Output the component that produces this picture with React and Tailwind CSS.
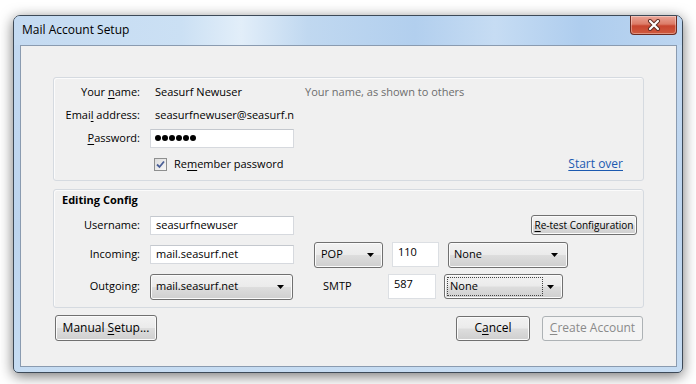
import React from "react";

const btn =
  "flex items-center rounded-[3px] border border-[#707070] bg-[linear-gradient(180deg,#f2f2f2_0%,#ebebeb_48%,#dddddd_52%,#cfcfcf_100%)] shadow-[inset_0_0_0_1px_#fbfbfb] text-black";

function Arrow() {
  return (
    <svg width="7" height="4" viewBox="0 0 7 4" className="shrink-0">
      <path d="M0 0H7L3.5 4Z" fill="#000" />
    </svg>
  );
}

function U({ children }) {
  return <span className="underline underline-offset-[2px] decoration-[1px]">{children}</span>;
}

export default function App() {
  return (
    <div
      className="w-[696px] h-[384px] bg-white overflow-hidden text-[11px] text-black"
      style={{ fontFamily: '"Open Sans", "Noto Sans", sans-serif' }}
    >
      <div className="ml-[13px] mt-[15px] w-[670px] h-[358px] rounded-t-[7px] rounded-b-[5px] border border-[#3d4a58] bg-[linear-gradient(180deg,#c3d9f1_0%,#bcd4ee_60%,#c6dcf2_100%)] shadow-[0_3px_14px_rgba(0,0,0,0.55)] flex flex-col">
        {/* title bar */}
        <div className="h-[29px] flex items-start rounded-t-[6px] bg-[linear-gradient(90deg,#c4daf1_0%,#cbe0f4_25%,#e2eef9_34%,#c0d8f0_44%,#b2cfee_60%,#c6dcf3_72%,#aecdee_85%,#bcd5f0_100%)]">
          <div className="pl-[8px] pt-[6px] text-[12px] leading-[16px]">Mail Account Setup</div>
          <div className="ml-auto mr-[5px] w-[47px] h-[19px] rounded-b-[4px] border border-t-0 border-[#6b2a20] bg-[linear-gradient(180deg,#eba597_0%,#dc7b67_45%,#c8452f_55%,#cf5a3e_100%)] shadow-[inset_0_0_0_1px_rgba(255,255,255,0.35)] flex items-center justify-center">
            <svg width="14" height="12" viewBox="0 0 14 12">
              <path d="M3 2L11 10M11 2L3 10" stroke="#5a2a22" strokeWidth="4" strokeLinecap="round" />
              <path d="M3 2L11 10M11 2L3 10" stroke="#ffffff" strokeWidth="2.2" strokeLinecap="round" />
            </svg>
          </div>
        </div>

        {/* client area */}
        <div className="ml-[6px] mr-[5px] mb-[5px] h-[322px] border border-[#8a9bb0] bg-[#f0f0f0] pt-[31px] pl-[32px]">
          {/* group 1 */}
          <div className="w-[591px] h-[104px] rounded-[3px] border border-[#d5dae0] shadow-[inset_1px_1px_0_#fbfbfb] pt-[2px] flex flex-col">
            <div className="h-[24px] flex items-center">
              <div className="w-[86px] text-right">
                Your <U>n</U>ame:
              </div>
              <div className="ml-[10px] w-[144px] pl-[5px]">Seasurf Newuser</div>
              <div className="ml-[11px] text-[#6d6d6d]">Your name, as shown to others</div>
            </div>
            <div className="h-[22px] flex items-center">
              <div className="w-[86px] text-right">
                Emai<U>l</U> address:
              </div>
              <div className="ml-[10px] w-[150px] pl-[5px] whitespace-nowrap">seasurfnewuser@seasurf.n</div>
            </div>
            <div className="h-[24px] flex items-center">
              <div className="w-[86px] text-right">
                <U>P</U>assword:
              </div>
              <div className="ml-[10px] w-[144px] h-[19px] bg-white border border-[#d6d9de] border-t-[#c4c8ce] flex items-center pl-[4px] gap-[1px]">
                {[0, 1, 2, 3, 4, 5].map((i) => (
                  <span key={i} className="w-[6px] h-[6px] rounded-full bg-black" />
                ))}
              </div>
            </div>
            <div className="h-[28px] flex items-center">
              <div className="w-[86px]" />
              <div className="ml-[14px] w-[13px] h-[13px] border border-[#8e8f8f] bg-[linear-gradient(135deg,#dcdcdc_0%,#f7f7f7_100%)] flex items-center justify-center">
                <svg width="9" height="9" viewBox="0 0 9 9">
                  <path d="M1 4.5L3.5 7L8 1.5" stroke="#4a5f97" strokeWidth="1.8" fill="none" />
                </svg>
              </div>
              <div className="ml-[7px]">
                Re<U>m</U>ember password
              </div>
              <div className="ml-auto mr-[20px] text-[12px] text-[#1c5ab0] underline underline-offset-[2px]">
                Start over
              </div>
            </div>
          </div>

          {/* group 2 */}
          <div className="mt-[8px] w-[591px] h-[119px] rounded-[3px] border border-[#d5dae0] shadow-[inset_1px_1px_0_#fbfbfb] flex flex-col">
            <div className="h-[20px] flex items-center pl-[8px] font-bold">Editing Config</div>
            <div className="h-[30px] flex items-center">
              <div className="w-[86px] text-right">Username:</div>
              <div className="ml-[10px] w-[144px] h-[19px] bg-white border border-[#d6d9de] border-t-[#c4c8ce] flex items-center pl-[5px]">
                seasurfnewuser
              </div>
              <div className={btn + " ml-auto mr-[6px] w-[106px] h-[20px] justify-center text-[10px]"}>
                <span>
                  <U>R</U>e-test Configuration
                </span>
              </div>
            </div>
            <div className="h-[29px] flex items-center">
              <div className="w-[86px] text-right">Incoming:</div>
              <div className="ml-[10px] w-[144px] h-[19px] bg-white border border-[#d6d9de] border-t-[#c4c8ce] flex items-center pl-[5px]">
                mail.seasurf.net
              </div>
              <div className={btn + " ml-[20px] w-[69px] h-[26px] pl-[6px] pr-[8px] justify-between"}>
                <span>POP</span>
                <Arrow />
              </div>
              <div className="ml-[9px] w-[47px] h-[25px] bg-white border border-[#dcdfe3] pl-[5px] pt-[1px] leading-[16px]">
                110
              </div>
              <div className={btn + " ml-[9px] w-[120px] h-[26px] pl-[5px] pr-[9px] justify-between"}>
                <span>None</span>
                <Arrow />
              </div>
            </div>
            <div className="h-[35px] flex items-center">
              <div className="w-[86px] text-right">Outgoing:</div>
              <div className={btn + " ml-[10px] w-[143px] h-[26px] pl-[5px] pr-[8px] justify-between"}>
                <span>mail.seasurf.net</span>
                <Arrow />
              </div>
              <div className="ml-[30px] w-[65px]">SMTP</div>
              <div className="w-[48px] h-[25px] bg-white border border-[#dcdfe3] pl-[5px] pt-[1px] leading-[16px]">
                587
              </div>
              <div className={btn + " ml-[8px] w-[119px] h-[25px] pl-[2px] pr-[8px]"}>
                <div className="w-[96px] h-[19px] border border-dotted border-[#444] flex items-center pl-[2px]">
                  None
                </div>
                <div className="ml-auto">
                  <Arrow />
                </div>
              </div>
            </div>
          </div>

          {/* bottom buttons */}
          <div className="mt-[7px] w-[591px] h-[26px] flex items-center">
            <div className={btn + " ml-[2px] w-[102px] h-[26px] justify-center text-[12px]"}>
              <span>
                Manual <U>S</U>etup...
              </span>
            </div>
            <div className={btn + " ml-auto w-[74px] h-[25px] justify-center text-[12px]"}>
              <span>
                C<U>a</U>ncel
              </span>
            </div>
            <div className="ml-[12px] mr-[1px] w-[101px] h-[25px] rounded-[3px] border border-[#adb2b5] bg-[#f4f4f4] flex items-center justify-center text-[12px] text-[#8a8a8a]">
              <span>
                <U>C</U>reate Account
              </span>
            </div>
          </div>
        </div>
      </div>
    </div>
  );
}
